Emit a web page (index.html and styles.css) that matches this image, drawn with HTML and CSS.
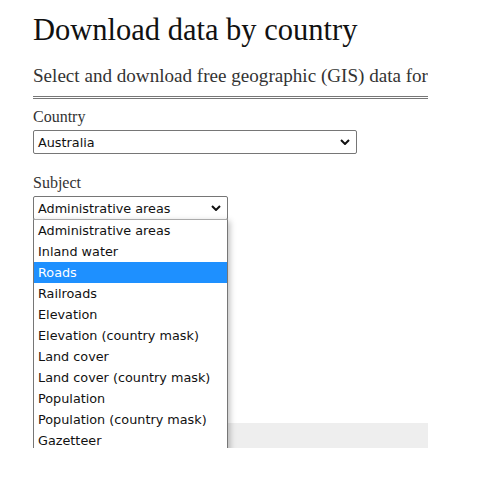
FILE: index.html
```html
<!DOCTYPE html>
<html>
<head>
<meta charset="utf-8">
<link rel="stylesheet" href="styles.css">
</head>
<body>
<div class="page">
  <h1 class="title">Download data by country</h1>
  <p class="lead">Select and download free geographic (GIS) data for</p>
  <div class="rule"></div>
  <div class="field">
    <div class="label">Country</div>
    <div class="select wide"><span>Australia</span><svg class="chev" viewBox="0 0 10 6" width="10" height="6"><path d="M1 1 L5 5 L9 1" fill="none" stroke="#111" stroke-width="2"/></svg></div>
  </div>
  <div class="field">
    <div class="label">Subject</div>
    <div class="dropwrap">
      <div class="select narrow"><span>Administrative areas</span><svg class="chev" viewBox="0 0 10 6" width="10" height="6"><path d="M1 1 L5 5 L9 1" fill="none" stroke="#111" stroke-width="2"/></svg></div>
      <ul class="list">
        <li>Administrative areas</li>
        <li>Inland water</li>
        <li class="sel">Roads</li>
        <li>Railroads</li>
        <li>Elevation</li>
        <li>Elevation (country mask)</li>
        <li>Land cover</li>
        <li>Land cover (country mask)</li>
        <li>Population</li>
        <li>Population (country mask)</li>
        <li>Gazetteer</li>
      </ul>
    </div>
  </div>
  <div class="spacer"></div>
  <div class="footer"></div>
</div>
</body>
</html>
```
FILE: styles.css
```css
html, body { margin: 0; padding: 0; background: #fff; }
body { font-family: "Liberation Serif", Georgia, serif; color: #111; }
.page { width: 395px; margin-left: 33px; height: 448px; overflow: hidden; position: relative; }
.title { font-weight: normal; font-size: 30.5px; margin: 12px 0 0; line-height: 36px; color: #111; }
.lead { font-size: 19.1px; color: #333; margin: 16px 0 0; line-height: 24px; white-space: nowrap; }
.rule { border-bottom: 3px double #777; margin-top: 8px; }
.field { margin-top: 9px; }
.field + .field { margin-top: 20px; }
.label { font-size: 16px; line-height: 18px; color: #333; margin-bottom: 4px; }
.select { box-sizing: border-box; height: 24px; border: 1px solid #767676; border-radius: 2px; display: flex; align-items: center; justify-content: space-between; padding: 0 5px 0 4px; font-family: "DejaVu Sans", Verdana, sans-serif; font-size: 12.8px; color: #111; background: #fff; }
.wide { width: 324px; }
.narrow { width: 195px; }
.chev { margin-right: 1px; }
.dropwrap { position: relative; z-index: 2; }
.list { position: absolute; left: 0; top: 23px; width: 195px; box-sizing: border-box; margin: 0; padding: 0; list-style: none; background: #fff; border: 1px solid #767676; border-top-color: #aaa; box-shadow: 2px 2px 6px rgba(0,0,0,0.25); font-family: "DejaVu Sans", Verdana, sans-serif; font-size: 12.8px; color: #111; }
.list li { height: 21px; line-height: 21px; padding-left: 4px; white-space: nowrap; }
.list li.sel { background: #1e90ff; color: #fff; }
.spacer { height: 203px; }
.footer { background: #eee; height: 40px; }
```
